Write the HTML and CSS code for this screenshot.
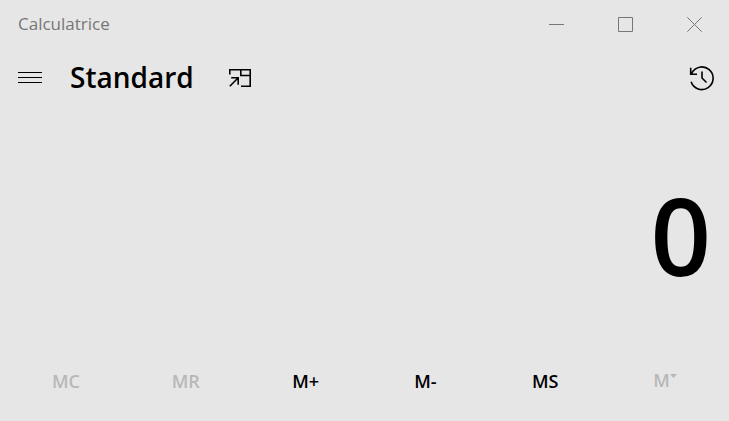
FILE: index.html
```html
<!DOCTYPE html>
<html lang="fr">
<head>
<meta charset="utf-8">
<title>Calculatrice</title>
<link rel="stylesheet" href="styles.css">
</head>
<body>
<div class="app">
  <header class="titlebar">
    <span class="app-name">Calculatrice</span>
    <div class="window-controls">
      <button type="button" aria-label="Réduire"><svg width="15" height="15" viewBox="0 0 15 15"><path d="M0 7.5h15"/></svg></button>
      <button type="button" aria-label="Agrandir"><svg width="15" height="15" viewBox="0 0 15 15"><path d="M.5.5h14v14H.5z"/></svg></button>
      <button type="button" aria-label="Fermer"><svg width="15" height="15" viewBox="0 0 15 15"><path d="M.3.3l14.4 14.4M14.7.3L.3 14.7"/></svg></button>
    </div>
  </header>
  <nav class="toolbar">
    <button type="button" class="menu" aria-label="Menu"><svg width="24" height="12" viewBox="0 0 24 12"><path d="M0 .5h24M0 5.5h24M0 10.5h24"/></svg></button>
    <h1>Standard</h1>
    <button type="button" class="on-top" aria-label="Conserver au premier plan"><svg width="22" height="20" viewBox="0 0 22 20"><path d="M.8 6.5V1.8h20.4v16.4H12M11.8 1.8v5.7h9.4M.8 18.2L9 10M2.2 9.8h7v7"/></svg></button>
    <button type="button" class="history" aria-label="Historique"><svg width="26" height="26" viewBox="0 0 26 26"><path d="M2.1 16.8A11.3 11.3 0 1 0 2.6 8.4M1.7 2.8v6.4H8M13 6.5V13l4.5 4.5"/></svg></button>
  </nav>
  <main class="display"><output>0</output></main>
  <div class="memory">
    <button type="button" disabled>MC</button>
    <button type="button" disabled>MR</button>
    <button type="button">M+</button>
    <button type="button">M-</button>
    <button type="button">MS</button>
    <button type="button" class="list" aria-label="Liste des mémoires" disabled>M<svg width="7" height="4" viewBox="0 0 7 4"><path d="M0 0h7L3.5 4z"/></svg></button>
  </div>
</div>
</body>
</html>
```
FILE: styles.css
```css
* {
  box-sizing: border-box;
}

body {
  margin: 0;
  background: #e6e6e6;
  color: #000;
  font-family: "Open Sans", "Noto Sans", sans-serif;
}

button {
  display: flex;
  align-items: center;
  justify-content: center;
  margin: 0;
  padding: 0;
  border: 0;
  background: none;
  color: inherit;
  font: inherit;
}

svg {
  display: block;
  fill: none;
  stroke: currentColor;
}

.app {
  display: flex;
  flex-direction: column;
  min-height: 100vh;
}

.titlebar {
  display: flex;
  justify-content: space-between;
  height: 49px;
  padding-left: 18px;
  color: #777;
}

.app-name {
  font-size: 17px;
  line-height: 48px;
}

.window-controls {
  display: flex;
}

.window-controls button {
  width: 69px;
}

.toolbar {
  display: flex;
  align-items: center;
  height: 58px;
  padding: 0 14px 0 18px;
}

h1 {
  margin: 0 35px 0 28px;
  padding-bottom: 2px;
  font-size: 28px;
  font-weight: 600;
  line-height: 38px;
}

.on-top svg,
.history svg {
  stroke-width: 1.6;
}

.history {
  margin-left: auto;
}

.display {
  display: flex;
  flex: 1;
  align-items: center;
  justify-content: flex-end;
  padding: 6px 18px 0 0;
}

.display output {
  font-size: 106px;
  font-weight: 600;
  line-height: 120px;
}

.memory {
  display: grid;
  grid-template-columns: repeat(6, 1fr);
  height: 64px;
  padding: 0 4px 16px 6px;
  font-size: 18px;
  font-weight: 600;
}

.memory button:disabled {
  color: #b8b8b8;
}

.memory .list {
  padding-bottom: 2px;
}

.list svg {
  align-self: flex-start;
  margin-top: 17px;
  fill: currentColor;
  stroke: none;
}
```
